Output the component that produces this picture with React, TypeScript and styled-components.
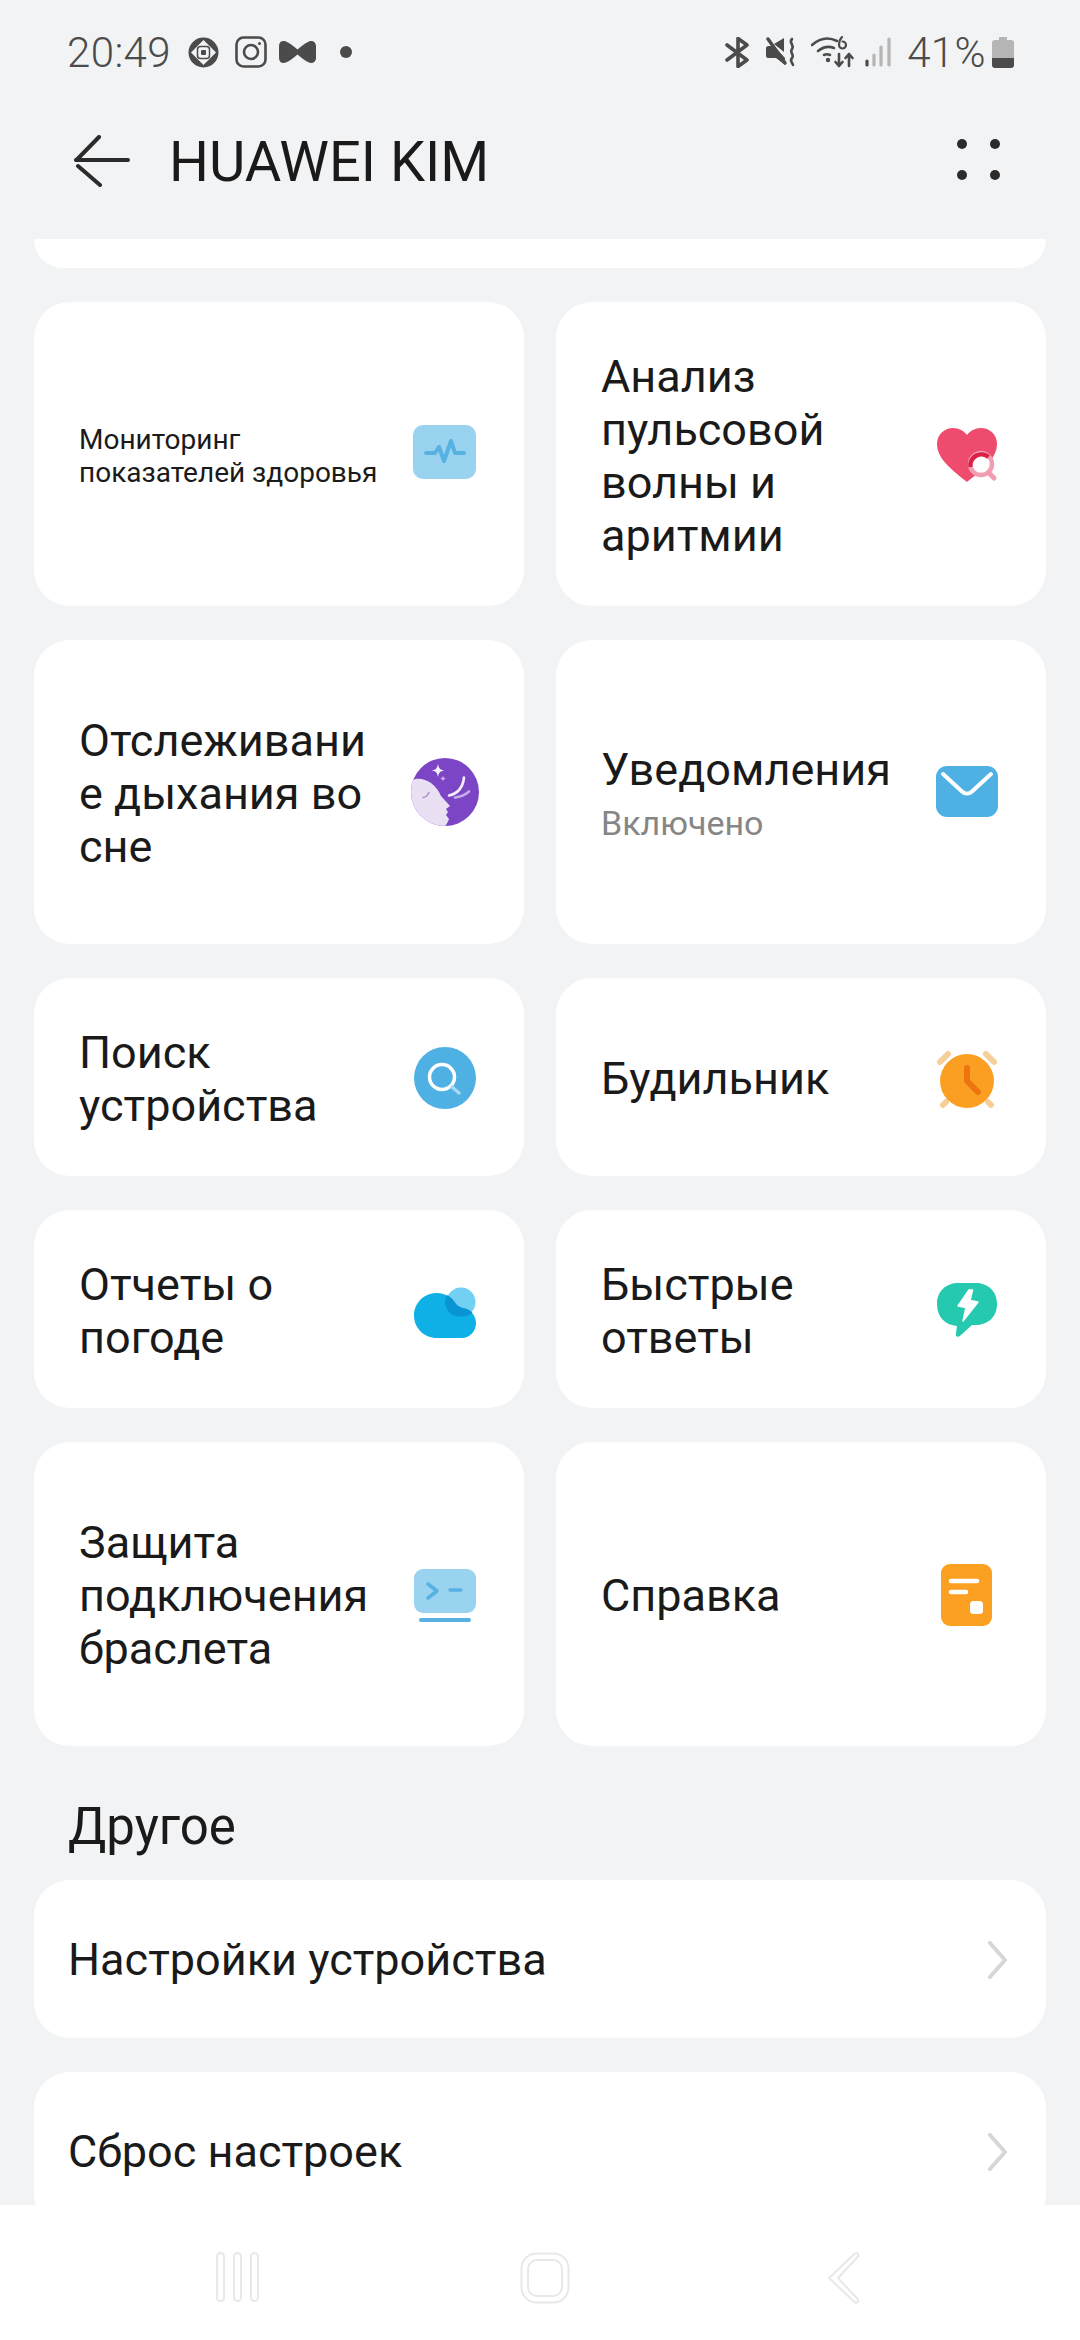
import React from 'react';
import styled, { createGlobalStyle } from 'styled-components';

const GlobalStyle = createGlobalStyle`
  html, body {
    margin: 0;
    padding: 0;
    background: #f2f3f5;
  }
  * {
    box-sizing: border-box;
  }
`;

const BackIcon = () => (
  <svg width="56" height="52" viewBox="0 0 56 52" fill="none" stroke="#2b2b2b" strokeWidth="4" strokeLinecap="round" strokeLinejoin="round">
    <path d="M2 25h52" />
    <path d="M25 2 2.5 25" />
    <path d="M4 31l22 19" />
  </svg>
);

const MoreIcon = () => (
  <svg width="44" height="42" viewBox="0 0 44 42" fill="#2b2b2b">
    <circle cx="5" cy="5" r="5" />
    <circle cx="38" cy="5" r="5" />
    <circle cx="5" cy="36" r="5" />
    <circle cx="38" cy="36" r="5" />
  </svg>
);

const PulseIcon = () => (
  <svg width="64" height="64" viewBox="0 0 64 64" fill="none">
    <rect x="0" y="3" width="63" height="54" rx="10" fill="#9ad3f0" />
    <path d="M13 31h9l4-6 5 14 7-20 4 12h9" stroke="#57b2e2" strokeWidth="4" strokeLinecap="round" strokeLinejoin="round" />
  </svg>
);

const HeartIcon = () => (
  <svg width="64" height="64" viewBox="0 0 64 64" fill="none">
    <path d="M32 60 C20 50 2 38 2 22 C2 12 10 6 18 6 C24 6 29 9 32 13 C35 9 40 6 46 6 C54 6 62 12 62 22 C62 38 44 50 32 60Z" fill="#ee4b6e" />
    <path d="M50 47l9 9" stroke="#f19db2" strokeWidth="5" strokeLinecap="round" />
    <circle cx="46" cy="42" r="11" fill="#ffffff" stroke="#f19db2" strokeWidth="4.5" />
    <path d="M35.5 45a11 11 0 0 1 18-10" stroke="#dc2146" strokeWidth="4.5" />
  </svg>
);

const SleepIcon = () => (
  <svg width="64" height="64" viewBox="0 0 64 64" fill="none" overflow="visible">
    <defs>
      <clipPath id="sleep-circle">
        <circle cx="32" cy="32" r="34" />
      </clipPath>
    </defs>
    <circle cx="32" cy="32" r="34" fill="#7b45c5" />
    <path
      d="M-3 21C4 17 12 19 18 23c5 4 8 8 10 13l9 10-4 3 2 3-2 3 3 4c-1 3-3 6-4 7H-3Z"
      fill="#e9e0f3"
      clipPath="url(#sleep-circle)"
    />
    <path d="M10 37.500c2.500 0 4.500-2 6-5" stroke="#a98fd0" strokeWidth="1.600" strokeLinecap="round" />
    <path d="M25 4c1 4.500 1.800 5.500 6 6.500-4.200 1-5 2-6 6.500-1-4.500-1.800-5.500-6-6.500 4.200-1 5-2 6-6.500Z" fill="#f5effb" />
    <path d="M30 15.500c.5 2.200 1 2.700 3 3-2 .5-2.500 1-3 3-.5-2-1-2.500-3-3 2-.3 2.500-.8 3-3Z" fill="#cdb5ec" />
    <path d="M36 35.500c9-2 14-9 15-18" stroke="#f5effb" strokeWidth="2.600" strokeLinecap="round" />
    <path d="M42 37.500c5-.5 10-2.500 14-6" stroke="#c6aeea" strokeWidth="2.600" strokeLinecap="round" />
  </svg>
);

const MailIcon = () => (
  <svg width="64" height="64" viewBox="0 0 64 64" fill="none">
    <rect x="1" y="6" width="62" height="51" rx="11" fill="#4fb0e4" />
    <path d="M8 14 27 31.500c3 2.800 7 2.800 10 0L56 14" stroke="#ffffff" strokeWidth="4" strokeLinecap="round" />
  </svg>
);

const SearchIcon = () => (
  <svg width="64" height="64" viewBox="0 0 64 64" fill="none">
    <circle cx="32" cy="33" r="31" fill="#4fb0e4" />
    <circle cx="29" cy="32" r="12.500" stroke="#ffffff" strokeWidth="3.500" />
    <path d="M39 42l7 6" stroke="#a5d8f2" strokeWidth="3.500" strokeLinecap="round" />
  </svg>
);

const AlarmIcon = () => (
  <svg width="64" height="64" viewBox="0 0 64 64" fill="none" strokeLinecap="round">
    <path d="M5 17l8-8M59 17l-8-8M8 60l3-3M56 60l-3-3" stroke="#f6ce97" strokeWidth="6" />
    <circle cx="32" cy="36" r="27" fill="#fb9f23" />
    <path d="M32 23v13l11 11" stroke="#ee7410" strokeWidth="6" strokeLinejoin="round" />
  </svg>
);

const CloudIcon = () => (
  <svg width="64" height="64" viewBox="0 0 64 64" fill="none">
    <circle cx="48" cy="25" r="14.500" fill="#72d0f2" />
    <path d="M24 61C11 61 1 51 1 38.500 1 26 11 16 24 16c8 0 14 4 19 11 1.500 2 4 3 7 4 8 1.500 13 8 13 15 0 8-6 15-14 15Z" fill="#0eb0e6" />
    <path d="M34 18c4 2 6.500 5 9 9 1.500 2 4 3 7 4 4 .7 7 2.500 9.500 4.500A14.500 14.500 0 0 1 48 39.500 14.500 14.500 0 0 1 34 18Z" fill="#0a94d4" />
  </svg>
);

const ReplyIcon = () => (
  <svg width="64" height="64" viewBox="0 0 64 64" fill="none">
    <path d="M24 6h16c13 0 22 8 22 21s-9 21-22 21h-3L26 58c-3 3-6 2-5-2l1-7C10 48 2 40 2 27S11 6 24 6Z" fill="#25c9b0" />
    <path d="M34 13 23 29l8 1.500-3 13.500 15-19-8-1.500 2.500-10.500Z" fill="#ffffff" stroke="#ffffff" strokeWidth="1.500" strokeLinejoin="round" />
  </svg>
);

const TerminalIcon = () => (
  <svg width="64" height="64" viewBox="0 0 64 64" fill="none" strokeLinecap="round" strokeLinejoin="round">
    <rect x="1" y="7" width="62" height="44" rx="9" fill="#9ad3f0" />
    <path d="M15 22l9 7-9 7" stroke="#57b2e2" strokeWidth="3.500" />
    <path d="M37 28h11" stroke="#57b2e2" strokeWidth="3.500" />
    <path d="M8 58h48" stroke="#57b2e2" strokeWidth="4" />
  </svg>
);

const GuideIcon = () => (
  <svg width="64" height="64" viewBox="0 0 64 64" fill="none">
    <rect x="6" y="2" width="51" height="62" rx="9" fill="#fba021" />
    <path d="M16 19h26M16 30h15" stroke="#ffffff" strokeWidth="4.500" strokeLinecap="round" />
    <rect x="35" y="39" width="13" height="13" rx="3.500" fill="#ffffff" />
  </svg>
);

const Chevron = () => (
  <svg width="20" height="38" viewBox="0 0 20 38" fill="none" stroke="#d6d6d6" strokeWidth="4" strokeLinecap="round" strokeLinejoin="round">
    <path d="M2 2l15 17L2 36" />
  </svg>
);

const aFeatures = [
  { sRows: 'tall', sTitle: 'Мониторинг показателей здоровья', bSmall: true, oIcon: <PulseIcon /> },
  { sRows: 'tall', sTitle: 'Анализ пульсовой волны и аритмии', oIcon: <HeartIcon /> },
  { sRows: 'tall', sTitle: 'Отслеживание дыхания во сне', oIcon: <SleepIcon /> },
  { sRows: 'tall', sTitle: 'Уведомления', sSub: 'Включено', oIcon: <MailIcon /> },
  { sRows: 'short', sTitle: 'Поиск устройства', oIcon: <SearchIcon /> },
  { sRows: 'short', sTitle: 'Будильник', oIcon: <AlarmIcon /> },
  { sRows: 'short', sTitle: 'Отчеты о погоде', oIcon: <CloudIcon /> },
  { sRows: 'short', sTitle: 'Быстрые ответы', oIcon: <ReplyIcon /> },
  { sRows: 'tall', sTitle: 'Защита подключения браслета', oIcon: <TerminalIcon /> },
  { sRows: 'tall', sTitle: 'Справка', oIcon: <GuideIcon /> },
];

const App = () => {
  return (
    <Screen>
      <GlobalStyle />
      <StatusBar>
        <StatusGroup>
          <StatusText>20:49</StatusText>
          <StatusSvg $ml={17} width="31" height="31" viewBox="0 0 31 31" fill="none">
            <circle cx="15.500" cy="15.500" r="15" fill="#4b4b4b" />
            <path d="M15.500 3 28 15.500 15.500 28 3 15.500Z" fill="#f2f3f5" />
            <rect x="9.500" y="9.500" width="12" height="12" rx="3" stroke="#4b4b4b" strokeWidth="1.500" />
            <rect x="13" y="13" width="5" height="5" rx="1" fill="#4b4b4b" />
          </StatusSvg>
          <StatusSvg $ml={16} width="32" height="32" viewBox="0 0 32 32" fill="none" stroke="#4b4b4b" strokeWidth="2.600">
            <rect x="1.500" y="1.500" width="29" height="29" rx="7" />
            <circle cx="16" cy="16" r="7" />
            <circle cx="24.500" cy="7.500" r="1.500" fill="#4b4b4b" strokeWidth="0" />
          </StatusSvg>
          <StatusSvg $ml={12} width="37" height="22" viewBox="0 0 37 22" fill="#4b4b4b">
            <path d="M0 5c0-4 3-6 7-4.500 4 1.500 8 5 11.500 8 3.500-3 7.500-6.500 11.500-8C33 -1 37 1 37 5v12c0 4-4 6-7 4.500-4-1.500-8-5-11.500-8-3.500 3-7.500 6.500-11.500 8C3 23 0 21 0 17Z" />
          </StatusSvg>
          <StatusSvg $ml={24} width="12" height="12" viewBox="0 0 12 12" fill="#4b4b4b">
            <circle cx="6" cy="6" r="6" />
          </StatusSvg>
        </StatusGroup>
        <StatusGroup>
          <StatusSvg width="27" height="31" viewBox="0 0 27 31" fill="none" stroke="#4b4b4b" strokeWidth="3.600" strokeLinejoin="round" strokeLinecap="round">
            <path d="M3 8l20 15-9 6.500V1.500L23 8 3 23" />
          </StatusSvg>
          <StatusSvg $ml={15} width="30" height="30" viewBox="0 0 30 30" fill="none">
            <path d="M0 11c0-1 1-2 2-2h6L19 21v7L10 21H2c-1 0-2-1-2-2Z" fill="#4b4b4b" />
            <path d="M8 7l10-6v14Z" fill="#4b4b4b" />
            <path d="M2 2l17 24" stroke="#4b4b4b" strokeWidth="3.400" strokeLinecap="round" />
            <path d="M26 2c-4 4 3 6 0 10s3 6 0 9 1 5 1 7" stroke="#4b4b4b" strokeWidth="2.600" strokeLinecap="round" />
          </StatusSvg>
          <StatusSvg $ml={15} width="43" height="32" viewBox="0 0 43 32" fill="none" stroke="#4b4b4b" strokeLinecap="round" strokeLinejoin="round">
            <path d="M1 9c8-7 17-8 25-4" strokeWidth="2.600" />
            <path d="M7 15c5-4 11-5 16-3" strokeWidth="2.600" />
            <path d="M13 19c2-1 4-1 6 0" strokeWidth="2.600" />
            <circle cx="17" cy="24" r="2.200" fill="#4b4b4b" strokeWidth="0" />
            <path d="M31 1c-2 2-3 5-3 8a3.500 3.500 0 1 0 3.500-3.500" strokeWidth="2.200" />
            <path d="M28 18v12M24.500 26l3.500 4 3.500-4" strokeWidth="2.600" />
            <path d="M38 30V18M34.500 22l3.500-4 3.500 4" strokeWidth="2.600" />
          </StatusSvg>
          <StatusSvg $ml={11} width="26" height="30" viewBox="0 0 26 30" fill="none" strokeWidth="3.200" strokeLinecap="round">
            <path d="M2 24v4" stroke="#4b4b4b" />
            <path d="M9 18v10M16 10v18M24 2v26" stroke="#b5b5b5" />
          </StatusSvg>
          <StatusPercent>41%</StatusPercent>
          <StatusSvg $ml={6} width="22" height="31" viewBox="0 0 22 31">
            <path d="M7 0h8v3h4c2 0 3 1 3 3v21H0V6c0-2 1-3 3-3h4Z" fill="#b5b5b5" />
            <path d="M0 21h22v7c0 2-1 3-3 3H3c-2 0-3-1-3-3Z" fill="#4b4b4b" />
          </StatusSvg>
        </StatusGroup>
      </StatusBar>

      <TitleBar>
        <BackButton>
          <BackIcon />
        </BackButton>
        <Title>HUAWEI KIM</Title>
        <MoreButton>
          <MoreIcon />
        </MoreButton>
      </TitleBar>

      <Content>
        <ClippedCard />
        <FeatureGrid>
          {aFeatures.map((oFeature) => (
            <FeatureCard key={oFeature.sTitle} $short={oFeature.sRows === 'short'}>
              <FeatureText>
                <FeatureTitle $small={oFeature.bSmall}>{oFeature.sTitle}</FeatureTitle>
                {oFeature.sSub && <FeatureSub>{oFeature.sSub}</FeatureSub>}
              </FeatureText>
              <FeatureIcon>{oFeature.oIcon}</FeatureIcon>
            </FeatureCard>
          ))}
        </FeatureGrid>
        <SectionTitle>Другое</SectionTitle>
        <ListCard>
          <ListLabel>Настройки устройства</ListLabel>
          <Chevron />
        </ListCard>
        <ListCard>
          <ListLabel>Сброс настроек</ListLabel>
          <Chevron />
        </ListCard>
      </Content>

      <NavBar>
        <svg width="46" height="50" viewBox="0 0 46 50" fill="#ffffff" stroke="#e8e8e8" strokeWidth="2">
          <rect x="1" y="1" width="7" height="48" rx="3.500" />
          <rect x="18" y="1" width="7" height="48" rx="3.500" />
          <rect x="35" y="1" width="7" height="48" rx="3.500" />
        </svg>
        <svg width="50" height="52" viewBox="0 0 50 52" fill="none" stroke="#e8e8e8" strokeWidth="2">
          <rect x="1.500" y="1.500" width="47" height="49" rx="15" />
          <rect x="8" y="8" width="34" height="36" rx="9" />
        </svg>
        <svg width="34" height="52" viewBox="0 0 34 52" fill="none" stroke="#e8e8e8" strokeWidth="2" strokeLinejoin="round">
          <path d="M28 1.500c2-1 4 1 3 3L11 26l20 21.500c1 2-1 4-3 3L2 26Z" />
        </svg>
      </NavBar>
    </Screen>
  );
};

const Screen = styled.div`
  width: 1080px;
  height: 2340px;
  display: flex;
  flex-direction: column;
  overflow: hidden;
  background: #f2f3f5;
  font-family: Roboto, 'Noto Sans', sans-serif;
  color: #1a1a1a;
`;

const StatusBar = styled.div`
  height: 104px;
  flex: none;
  display: flex;
  align-items: center;
  justify-content: space-between;
  padding: 0 66px 0 67px;
`;

const StatusGroup = styled.div`
  display: flex;
  align-items: center;
`;

const StatusText = styled.span`
  font-size: 42px;
  font-weight: 300;
  color: #4b4b4b;
  letter-spacing: 0.4px;
`;

const StatusPercent = styled(StatusText)`
  margin-left: 16px;
`;

const StatusSvg = styled.svg<{ $ml?: number }>`
  flex: none;
  margin-left: ${(props) => props.$ml || 0}px;
`;

const TitleBar = styled.div`
  height: 135px;
  flex: none;
  display: flex;
  align-items: flex-start;
  padding: 31px 66px 0 74px;
`;

const BackButton = styled.div`
  display: flex;
  flex: none;
  width: 95px;
`;

const Title = styled.h1`
  flex: 1;
  margin: -6px 0 0;
  font-size: 56px;
  font-weight: 400;
  line-height: 66px;
  color: #1a1a1a;
`;

const MoreButton = styled.div`
  display: flex;
  flex: none;
  margin: 4px 13px 0 0;
`;

const Content = styled.div`
  flex: 1;
  min-height: 0;
  overflow: hidden;
  padding: 0 34px;
`;

const ClippedCard = styled.div`
  height: 29px;
  margin: 0 0 34px;
  background: #ffffff;
  border-radius: 0 0 36px 36px;
`;

const FeatureGrid = styled.div`
  display: grid;
  grid-template-columns: 490px 490px;
  column-gap: 32px;
  row-gap: 34px;
`;

const FeatureCard = styled.div<{ $short?: boolean }>`
  height: ${(props) => (props.$short ? 198 : 304)}px;
  display: flex;
  align-items: center;
  gap: 30px;
  padding: 0 47px 0 45px;
  background: #ffffff;
  border-radius: 36px;
`;

const FeatureText = styled.div`
  flex: 1;
  min-width: 0;
  padding-top: 3px;
`;

const FeatureTitle = styled.div<{ $small?: boolean }>`
  font-size: ${(props) => (props.$small ? 28 : 45)}px;
  line-height: ${(props) => (props.$small ? 33 : 53)}px;
  overflow-wrap: anywhere;
`;

const FeatureSub = styled.div`
  font-size: 34px;
  line-height: 55px;
  margin-bottom: -6px;
  color: #868686;
`;

const FeatureIcon = styled.div`
  flex: none;
  width: 64px;
  height: 64px;
`;

const SectionTitle = styled.h2`
  margin: 0;
  height: 134px;
  padding: 50px 0 0 34px;
  font-size: 51px;
  font-weight: 400;
  line-height: 62px;
  color: #1a1a1a;
`;

const ListCard = styled.div`
  height: 158px;
  margin-bottom: 34px;
  display: flex;
  align-items: center;
  justify-content: space-between;
  padding: 1px 38px 0 34px;
  background: #ffffff;
  border-radius: 36px;
`;

const ListLabel = styled.div`
  font-size: 45px;
  line-height: 53px;
`;

const NavBar = styled.div`
  height: 135px;
  flex: none;
  display: flex;
  align-items: flex-start;
  padding: 47px 219px 0 216px;
  justify-content: space-between;
  background: #ffffff;
`;

export default App;
